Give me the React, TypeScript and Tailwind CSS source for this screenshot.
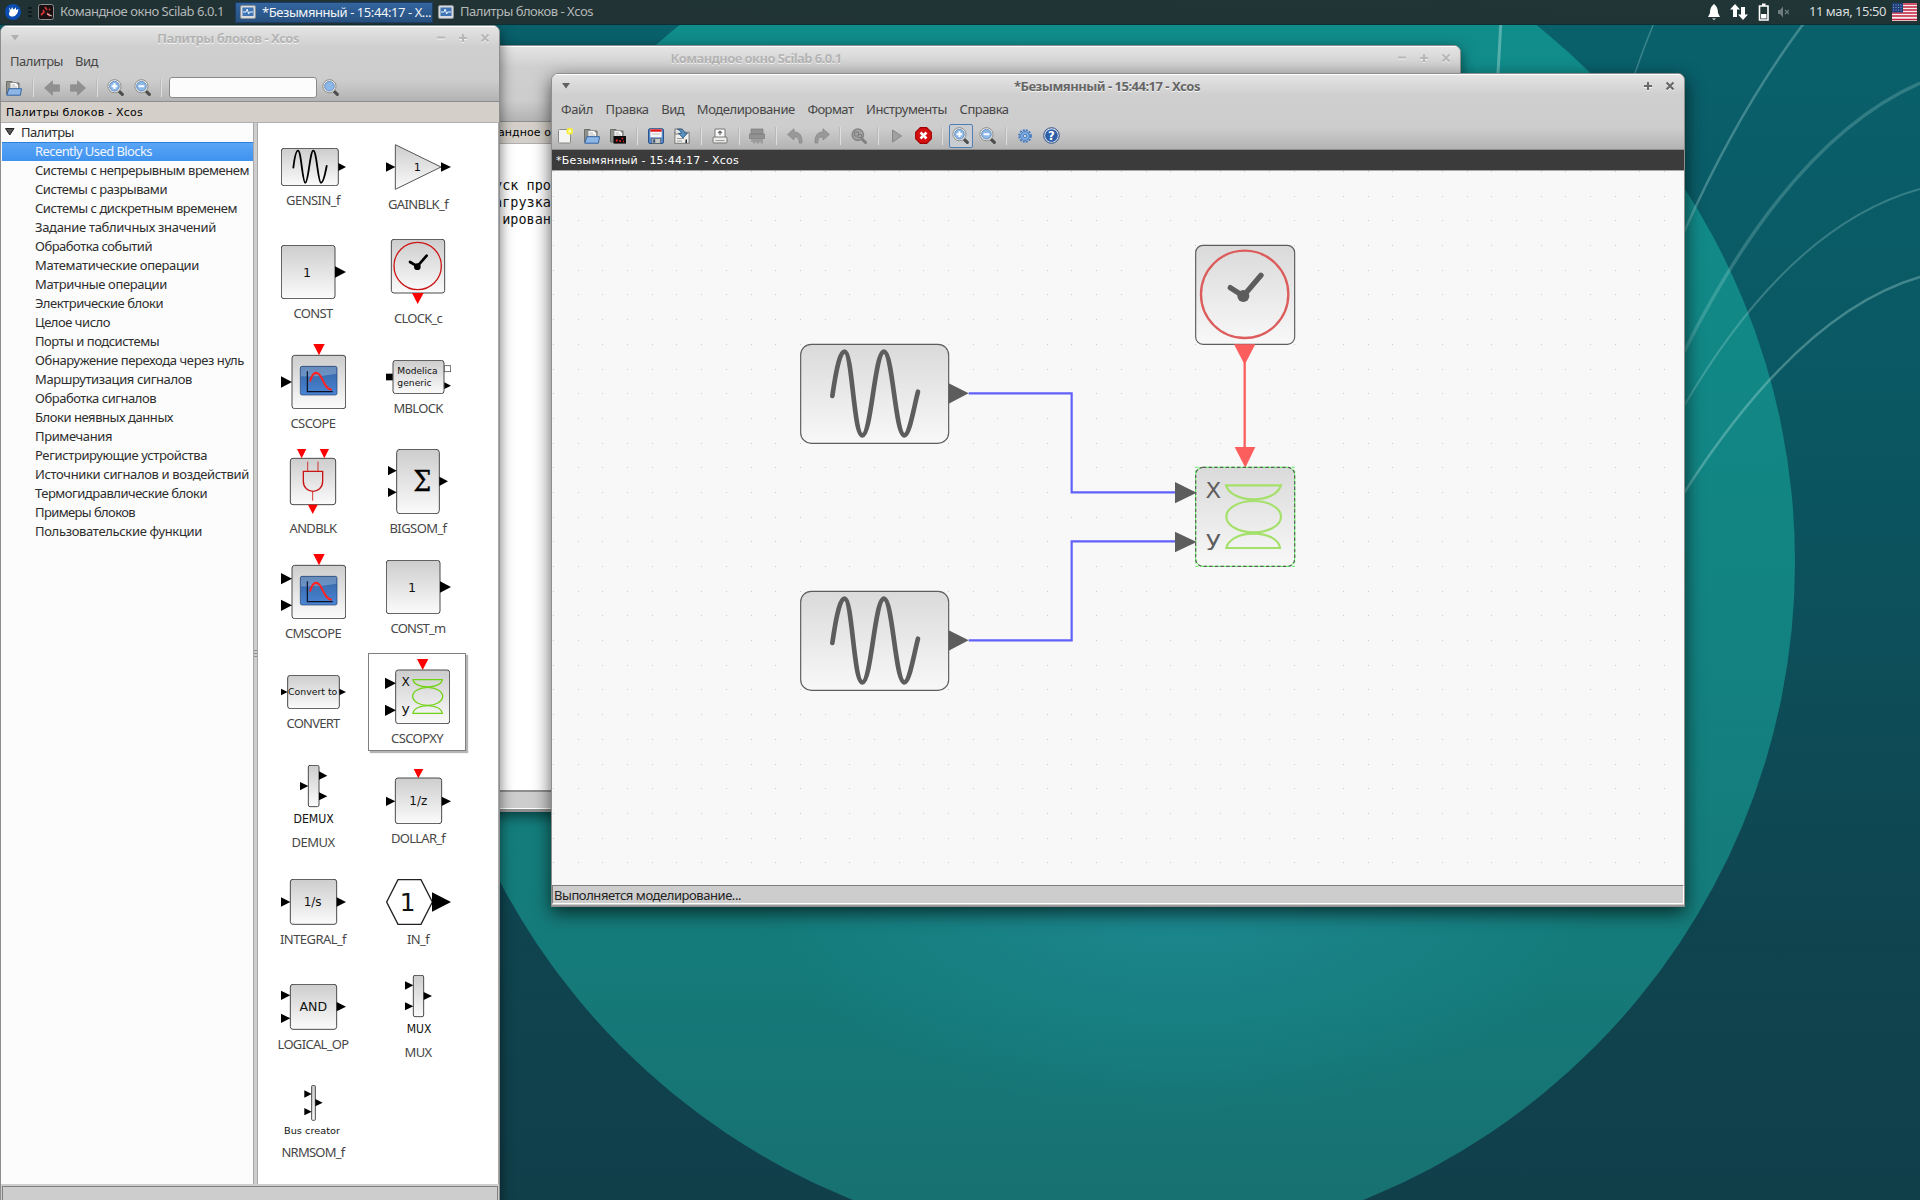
import React, { useLayoutEffect, useRef, useState } from "react";

/** One line of text whose tracking is adjusted so that it spans `w` pixels. */
function Txt({ w, children, className = "" }: { w: number; children: string; className?: string }) {
  const ref = useRef<HTMLSpanElement>(null);
  const [gap, setGap] = useState(0);
  useLayoutEffect(() => {
    const el = ref.current;
    if (!el) return;
    el.style.letterSpacing = "0px";
    const natural = el.getBoundingClientRect().width;
    setGap((w - natural) / children.length);
    el.style.letterSpacing = `${(w - natural) / children.length}px`;
  }, [w, children]);
  return (
    <span ref={ref} className={"inline-block whitespace-pre " + className} style={{ letterSpacing: `${gap}px` }}>
      {children}
    </span>
  );
}

const Tri = ({ p, f = "#000" }: { p: string; f?: string }) => <polygon points={p} fill={f} />;
const Box = (p: { x: number; y: number; w: number; h: number; r?: number }) => (
  <rect x={p.x} y={p.y} width={p.w} height={p.h} rx={p.r ?? 8} fill="url(#blk)" stroke="#4a4a4a" strokeWidth="3" />
);
const T = (p: { x: number; y: number; s: number; l?: number; c: string; f?: string; start?: boolean }) => (
  <text
    x={p.x}
    y={p.y}
    fontSize={p.s}
    textAnchor={p.start ? "start" : "middle"}
    textLength={p.l}
    lengthAdjust="spacingAndGlyphs"
    fill={p.f ?? "#111"}
    fontFamily="DejaVu Sans, sans-serif"
  >
    {p.c}
  </text>
);

function ScopeFace({ dy = 0 }: { dy?: number }) {
  return (
    <g transform={`translate(0 ${dy})`}>
      <Tri p="190,675 224,675 207,709" f="#f00" />
      <Box x={126} y={709} w={161} h={160} />
      <rect x="151" y="742" width="110" height="86" rx="5" fill="url(#scr)" stroke="#23406f" strokeWidth="2" />
      <path d="M153 744 H259 V764 Q210 774 153 772 Z" fill="#fff" opacity=".25" />
      <path d="M172 757 V818 H248" fill="none" stroke="#0a1020" strokeWidth="3.5" />
      <path d="M180 787 C188 762 196 758 205 764 C218 772 224 814 245 811" fill="none" stroke="#f22" strokeWidth="6" />
    </g>
  );
}

type Block = { name: string; w: number; box: [number, number, number, number]; art: React.ReactNode; selected?: boolean };

const blocks: Block[] = [
  {
    name: "GENSIN_f", w: 54, box: [93, 84, 195, 114],
    art: (<>
      <Box x={94} y={85} w={171} h={112} />
      <path d="M130 143 C134 110 139 92 144 92 C154 92 157 188 166 188 C175 188 180 92 190 92 C200 92 204 188 213 188 C220 188 225 165 230 138" fill="none" stroke="#000" strokeWidth="5.5" strokeLinecap="round" />
      <Tri p="265,129 288,141 265,153" />
    </>),
  },
  {
    name: "GAINBLK_f", w: 60, box: [408, 72, 195, 138],
    art: (<>
      <polygon points="436,74 573,141 436,208" fill="url(#blk)" stroke="#555" strokeWidth="3" />
      <Tri p="408,127 436,141 408,155" /><Tri p="573,127 603,141 573,155" />
      <T x={502} y={153} s={34} c="1" />
    </>),
  },
  {
    name: "CONST", w: 39, box: [93, 375, 195, 162],
    art: (<><Box x={94} y={376} w={161} h={160} /><Tri p="255,439 288,456 255,473" /><T x={171} y={470} s={38} c="1" /></>),
  },
  {
    name: "CLOCK_c", w: 48, box: [408, 360, 195, 195],
    art: (<>
      <Box x={424} y={361} w={160} h={161} />
      <circle cx="503" cy="441" r="71" fill="none" stroke="#cc1414" strokeWidth="4" />
      <path d="M480 429 L502 442 L530 410" fill="none" stroke="#000" strokeWidth="8" strokeLinecap="round" />
      <circle cx="502" cy="443" r="10" />
      <Tri p="486,522 521,522 503,555" f="#f00" />
    </>),
  },
  {
    name: "CSCOPE", w: 45, box: [93, 675, 195, 195],
    art: (<><ScopeFace /><Tri p="93,772 126,789 93,806" /></>),
  },
  {
    name: "MBLOCK", w: 49, box: [408, 720, 195, 102],
    art: (<>
      <Box x={429} y={721} w={153} h={100} />
      <rect x="408" y="761" width="20" height="20" />
      <rect x="583" y="737" width="19" height="18" fill="#fff" stroke="#555" strokeWidth="2.5" />
      <Tri p="583,787 603,797 583,807" />
      <T x={442} y={762} s={26} l={121} c="Modelica" start /><T x={442} y={797} s={26} l={103} c="generic" start />
    </>),
  },
  {
    name: "ANDBLK", w: 47, box: [93, 990, 195, 195],
    art: (<>
      <Box x={121} y={1018} w={136} h={139} />
      <Tri p="141,990 169,990 155,1018" f="#f00" /><Tri p="209,990 237,990 223,1018" f="#f00" /><Tri p="174,1157 203,1157 188,1185" f="#f00" />
      <g fill="none" stroke="#cc1414">
        <path d="M173 1028 V1057 M204 1028 V1057 M188 1118 V1145" strokeWidth="2.5" />
        <path d="M160 1057 H218 V1087 C218 1127 160 1127 160 1087 Z" strokeWidth="4" />
      </g>
    </>),
  },
  {
    name: "BIGSOM_f", w: 57, box: [408, 990, 192, 195],
    art: (<>
      <Box x={440} y={991} w={128} h={193} r={10} />
      <Tri p="414,1041 440,1055 414,1069" /><Tri p="414,1106 440,1120 414,1134" /><Tri p="568,1073 594,1087 568,1101" />
      <text x="517" y="1115" fontSize="86" textAnchor="middle" textLength="54" lengthAdjust="spacingAndGlyphs" fontFamily="DejaVu Serif, serif" stroke="#000" strokeWidth="1">Σ</text>
    </>),
  },
  {
    name: "CMSCOPE", w: 56, box: [93, 45, 195, 195],
    art: (<><ScopeFace dy={-630} /><Tri p="93,102 126,119 93,136" /><Tri p="93,182 126,199 93,216" /></>),
  },
  {
    name: "CONST_m", w: 55, box: [408, 60, 195, 162],
    art: (<><Box x={409} y={61} w={161} h={160} /><Tri p="570,124 603,141 570,158" /><T x={486} y={155} s={38} c="1" /></>),
  },
  {
    name: "CONVERT", w: 53, box: [93, 405, 195, 102],
    art: (<><Box x={113} y={406} w={155} h={100} /><Tri p="93,446 113,456 93,466" /><Tri p="268,446 288,456 268,466" /><T x={188} y={465} s={28} l={148} c="Convert to" /></>),
  },
  {
    name: "CSCOPXY", w: 52, box: [405, 357, 195, 195], selected: true,
    art: (<>
      <Tri p="501,357 535,357 518,390" f="#f00" />
      <Box x={437} y={390} w={162} h={161} />
      <Tri p="405,413 438,430 405,447" /><Tri p="405,494 438,511 405,528" />
      <T x={467} y={437} s={36} l={25} c="X" /><T x={467} y={519} s={38} l={25} c="y" />
      <g fill="none" stroke="#73d216" strokeWidth="4">
        <path d="M489 419 H577 C572 448 494 448 489 419 Z" /><ellipse cx="533" cy="469" rx="45" ry="27" /><path d="M489 520 H577 C572 489 494 489 489 520 Z" />
      </g>
    </>),
  },
  {
    name: "DEMUX", w: 43, box: [93, 675, 195, 189],
    art: (<><Box x={175} y={676} w={32} h={124} r={5} /><Tri p="150,726 175,738 150,751" /><Tri p="207,694 232,707 207,719" /><Tri p="207,757 232,769 207,781" /><T x={191} y={850} s={35} l={121} c="DEMUX" /></>),
  },
  {
    name: "DOLLAR_f", w: 54, box: [408, 690, 195, 165],
    art: (<><Tri p="491,690 520,690 505,718" f="#f00" /><Box x={436} y={717} w={139} h={137} /><Tri p="408,773 436,787 408,801" /><Tri p="575,773 603,787 575,801" /><T x={505} y={798} s={36} l={54} c="1/z" /></>),
  },
  {
    name: "INTEGRAL_f", w: 66, box: [93, 57, 195, 138],
    art: (<><Box x={121} y={58} w={139} h={135} /><Tri p="93,112 121,126 93,140" /><Tri p="260,112 288,126 260,140" /><T x={188} y={138} s={36} l={54} c="1/s" /></>),
  },
  {
    name: "IN_f", w: 22, box: [408, 57, 195, 138],
    art: (<><polygon points="410,126 444,59 513,59 547,126 513,193 444,193" fill="#fff" stroke="#222" strokeWidth="4" /><Tri p="546,97 603,126 546,155" /><T x={473} y={152} s={74} c="1" /></>),
  },
  {
    name: "LOGICAL_OP", w: 71, box: [93, 372, 195, 138],
    art: (<><Box x={121} y={373} w={139} h={135} /><Tri p="93,392 121,406 93,420" /><Tri p="93,461 121,475 93,489" /><Tri p="260,426 288,440 260,454" /><T x={190} y={452} s={35} l={83} c="AND" /></>),
  },
  {
    name: "MUX", w: 27, box: [408, 345, 195, 189],
    art: (<><Box x={490} y={346} w={31} h={124} r={5} /><Tri p="465,364 490,376 465,389" /><Tri p="465,427 490,439 465,451" /><Tri p="521,396 546,408 521,420" /><T x={507} y={520} s={35} l={74} c="MUX" /></>),
  },
  {
    name: "NRMSOM_f", w: 63, box: [93, 675, 195, 159],
    art: (<><Box x={185} y={676} w={11} h={105} r={3} /><Tri p="163,691 185,702 163,713" /><Tri p="163,744 185,755 163,766" /><Tri p="196,717 218,728 196,739" /><T x={186} y={822} s={28} l={168} c="Bus creator" /></>),
  },
];

const tree: [string, number][] = [
  ["Recently Used Blocks", 117], ["Системы с непрерывным временем", 214], ["Системы с разрывами", 132],
  ["Системы с дискретным временем", 202], ["Задание табличных значений", 181], ["Обработка событий", 117],
  ["Математические операции", 164], ["Матричные операции", 132], ["Электрические блоки", 128], ["Целое число", 75],
  ["Порты и подсистемы", 124], ["Обнаружение перехода через нуль", 209], ["Маршрутизация сигналов", 157],
  ["Обработка сигналов", 121], ["Блоки неявных данных", 138], ["Примечания", 77], ["Регистрирующие устройства", 172],
  ["Источники сигналов и воздействий", 214], ["Термогидравлические блоки", 172], ["Примеры блоков", 100],
  ["Пользовательские функции", 167],
];

/* ---------- toolbar icons, 16 × 16 ---------- */
const Ic = ({ children, s = 16 }: { children: React.ReactNode; s?: number }) => (
  <svg width={s} height={s} viewBox="0 0 16 16" className="block shrink-0">{children}</svg>
);
const IcNew = () => (
  <Ic><rect x="1.5" y="1.5" width="12" height="13.5" rx="1" fill="#f4f4f2" stroke="#888a85" /><circle cx="12.8" cy="3.2" r="3.4" fill="#f6ee3c" /><circle cx="12.8" cy="3.2" r="1.6" fill="#fffcb0" /></Ic>
);
const FolderBase = () => (
  <><path d="M.5 14 V1.5 H6 L7 3 H13 V14 Z" fill="#8f918c" stroke="#6c6e69" /><path d="M4 9 V2.5 H10 L12.5 5 V9 Z" fill="#fafafa" stroke="#888a85" strokeWidth=".9" /><path d="M5.5 5 H9 M5.5 7 H11" stroke="#b5b5b5" /></>
);
const IcOpen = () => (
  <Ic><FolderBase /><path d="M2.8 8.7 H15.5 L14.4 15.2 H.8 Z" fill="#8cb6e6" stroke="#3465a4" /></Ic>
);
const IcOpenSci = () => (
  <Ic><FolderBase /><rect x="3.5" y="8" width="12.5" height="7.6" fill="#0b0b0b" /><path d="M6 13.5 L7.5 11.5 M10 14 V12 M11.5 10.5 h1.8 M13 13.5 h1" stroke="#e02020" strokeWidth="1.6" /></Ic>
);
const IcSave = () => (
  <Ic><rect x=".6" y=".8" width="14.8" height="14.6" rx="1.2" fill="#5d8fcb" stroke="#204a87" /><rect x="2.3" y="1.3" width="11.4" height="8" fill="#f6f6f6" /><rect x="2.3" y="1.3" width="11.4" height="2.4" fill="#e01818" /><path d="M4 6 H12" stroke="#c2c2c2" /><rect x="4" y="10.5" width="8.3" height="4.9" fill="#c6c8c3" stroke="#555" strokeWidth=".6" /><rect x="5.2" y="11.3" width="2" height="3.4" fill="#34517a" /></Ic>
);
const IcImport = () => (
  <Ic><rect x=".9" y="4.3" width="14.2" height="11" fill="#efefed" stroke="#777" /><rect x="1" y="1" width="7" height="5" fill="#e4e4e2" stroke="#777" /><path d="M3 10.5 H10 M3 13 H8" stroke="#999" /><path d="M12.2 11.5 V15" stroke="#111" strokeWidth="1.4" /><path d="M3.5 1.2 C8 .6 10.8 2.4 10.8 5.3 H13.4 L9 10 L4.6 5.3 H7.2 C7.2 3.4 6 2.4 3.5 1.2 Z" fill="#5b93bf" stroke="#1f4f7c" strokeWidth=".8" /></Ic>
);
const IcPrint = () => (
  <Ic><path d="M3 10 V1 H13 V10" fill="#fafafa" stroke="#777" /><path d="M8 7 V3.5 M6.2 5 L8 3.3 L9.8 5" fill="none" stroke="#666" strokeWidth="1.2" /><rect x="1" y="9" width="14" height="6" rx="1" fill="#ececea" stroke="#777" /><path d="M3.5 12.6 H12.5" stroke="#999" /></Ic>
);
const IcShred = () => (
  <Ic><path d="M2 1 H14 V6 H16 V10.5 H0 V6 H2 Z" fill="#929292" stroke="#7b7b7b" strokeWidth=".7" /><path d="M3 10.5 V14 M5 10.5 V15.5 M7 10.5 V14.5 M9 10.5 V15.5 M11 10.5 V14.5 M13 10.5 V15.5" stroke="#8b8b8b" strokeWidth="1.3" /><path d="M2 6 H14" stroke="#7a7a7a" /></Ic>
);
const IcUndo = ({ flip = false }: { flip?: boolean }) => (
  <Ic><g transform={flip ? "translate(16 0) scale(-1 1)" : undefined}><path d="M.6 6.5 L7 .8 V4 C12.5 4 15.2 7.5 15 15 H12.2 C12.2 10.5 11 9 7 9 V12 Z" fill="#999" stroke="#888" strokeWidth=".8" /></g></Ic>
);
const IcFind = () => (
  <Ic><path d="M10 10 L14.5 14.5" stroke="#808080" strokeWidth="3" strokeLinecap="round" /><circle cx="6.8" cy="6.8" r="5.7" fill="#a2a2a2" stroke="#858585" strokeWidth="1.5" /><path d="M3.5 4 h4 v4 h-4z M7 6.5 h3.5 v3 h-4" fill="none" stroke="#7c7c7c" /></Ic>
);
const IcPlay = () => (<Ic><path d="M3.5 2 L12.5 8 L3.5 14 Z" fill="#a0a0a0" stroke="#868686" /></Ic>);
const IcStop = () => (
  <Ic s={17}><path d="M5 .6 H11 L15.4 5 V11 L11 15.4 H5 L.6 11 V5 Z" fill="#d40f0f" stroke="#a00000" /><path d="M5.2 5.2 L10.8 10.8 M10.8 5.2 L5.2 10.8" stroke="#fff" strokeWidth="2.4" /></Ic>
);
const IcMag = ({ sign }: { sign: "+" | "-" | "" }) => (
  <Ic s={17}><path d="M11 11.2 L14.4 14.4" stroke="#4c4f4c" strokeWidth="3" strokeLinecap="round" /><circle cx="7" cy="6.8" r="6.200" fill="#e8e8e6" stroke="#8a8c88" strokeWidth=".9" /><circle cx="7" cy="6.8" r="4.5" fill="#8db9e8" stroke="#5b87bd" strokeWidth=".8" />
    {sign !== "" && <path d={sign === "+" ? "M4.3 6.8 H9.7 M7 4.1 V9.5" : "M4.3 6.8 H9.7"} stroke="#fff" strokeWidth="1.9" />}
  </Ic>
);
const IcGear = () => (
  <Ic><circle cx="8" cy="8" r="5.9" fill="none" stroke="#3f7ac4" strokeWidth="1.8" strokeDasharray="2 1.1" /><circle cx="8" cy="8" r="4.4" fill="#84aee2" stroke="#3f7ac4" strokeWidth="1" /><circle cx="8" cy="8" r="1.8" fill="#d6d6d6" stroke="#3f7ac4" /></Ic>
);
const IcHelp = () => (
  <Ic s={17}><circle cx="8" cy="8" r="7.3" fill="#e7edf6" stroke="#20427c" strokeWidth=".9" /><circle cx="8" cy="8" r="6" fill="#2f5ea8" /><text x="8" y="12" fontSize="11" fontWeight="bold" textAnchor="middle" fill="#fff" fontFamily="DejaVu Sans, sans-serif">?</text></Ic>
);
const IcArrow = ({ flip = false }: { flip?: boolean }) => (
  <Ic><g transform={flip ? "translate(16 0) scale(-1 1)" : undefined}><path d="M.5 8 L8.5 .8 V4.8 H15.5 V11.2 H8.5 V15.2 Z" fill="#909090" stroke="#868686" strokeWidth=".6" /></g></Ic>
);

const Slot = ({ children }: { children: React.ReactNode }) => (
  <div className="flex h-6 w-[26.4px] shrink-0 items-center justify-center">{children}</div>
);
const Sep = () => (
  <div className="flex h-6 w-[11.3px] shrink-0 items-center justify-center"><div className="h-[18px] w-[2px] border-l border-[#b9b9b9] bg-[#dedede]" /></div>
);

const BtnMin = ({ c }: { c: string }) => (<svg width="22" height="12" className="block"><path d="M7 6.5 H15" stroke="#f2f2f2" strokeWidth="2" /><path d="M7 5.5 H15" stroke={c} strokeWidth="2" /></svg>);
const BtnMax = ({ c }: { c: string }) => (<svg width="22" height="12" className="block"><path d="M7 7 H15 M11 3 V11" stroke="#f2f2f2" strokeWidth="2" /><path d="M7 6 H15 M11 2 V10" stroke={c} strokeWidth="2" /></svg>);
const BtnX = ({ c }: { c: string }) => (<svg width="22" height="12" className="block"><path d="M7.5 3.5 L14.5 10.5 M14.5 3.5 L7.5 10.5" stroke="#f2f2f2" strokeWidth="2" /><path d="M7.5 2.5 L14.5 9.5 M14.5 2.5 L7.5 9.5" stroke={c} strokeWidth="2.2" /></svg>);
const Caret = ({ c }: { c: string }) => (<svg width="10" height="8" className="block"><path d="M1 1 H9 L5 6.5 Z" fill={c} /></svg>);

const XcosIcon = () => (
  <svg width="16" height="16" className="block shrink-0"><rect x=".5" y="1.5" width="15" height="13" rx="1.5" fill="#d7dade" stroke="#8e9296" /><rect x="2.5" y="3.5" width="11" height="8.5" fill="#3f74b5" /><path d="M3 8 H6 L7.2 5 L8.6 10 L9.6 8 H13" fill="none" stroke="#e8f2ff" /></svg>
);

function Wallpaper() {
  return (
    <svg width="1920" height="1200" className="absolute inset-0 block">
      <defs>
        <linearGradient id="blk" x1="0" y1="0" x2="0" y2="1"><stop offset="0" stopColor="#cdcdcd" /><stop offset="1" stopColor="#fbfbfb" /></linearGradient>
        <linearGradient id="blkSoft" x1="0" y1="0" x2="0" y2="1"><stop offset="0" stopColor="#dadada" /><stop offset="1" stopColor="#f8f8f8" /></linearGradient>
        <linearGradient id="scr" x1="0" y1="0" x2="0" y2="1"><stop offset="0" stopColor="#3465a4" /><stop offset="1" stopColor="#4a84d4" /></linearGradient>
        <linearGradient id="sky" x1="0" y1="0" x2="0" y2="1"><stop offset="0" stopColor="#09616c" /><stop offset=".35" stopColor="#0a5762" /><stop offset=".75" stopColor="#0f4550" /><stop offset="1" stopColor="#103f4a" /></linearGradient>
        <linearGradient id="disc" x1="0" y1="0" x2="0" y2="1"><stop offset="0" stopColor="#108f8e" /><stop offset=".5" stopColor="#128482" /><stop offset=".8" stopColor="#157a79" /><stop offset="1" stopColor="#186f6f" /></linearGradient>
        <radialGradient id="glow"><stop offset="0" stopColor="#1d8a94" stopOpacity=".85" /><stop offset="1" stopColor="#1d8a94" stopOpacity="0" /></radialGradient>
      </defs>
      <rect width="1920" height="1200" fill="url(#sky)" />
      <circle cx="1108" cy="562" r="687" fill="url(#disc)" />
      <ellipse cx="1180" cy="880" rx="420" ry="240" fill="url(#glow)" />
      <g fill="none" stroke="#bfe6e4">
        <path d="M1502 0 Q1500 40 1497 90" strokeWidth="3" opacity=".4" />
        <path d="M1664 0 Q1648 35 1634 76" strokeWidth="1.5" opacity=".28" />
        <path d="M1822 0 Q1745 95 1684 232" strokeWidth="2.5" opacity=".3" />
        <path d="M1920 83 Q1790 140 1684 352" strokeWidth="3.5" opacity=".22" />
        <path d="M1920 189 Q1790 225 1684 406" strokeWidth="2" opacity=".25" />
        <path d="M1920 277 Q1800 312 1684 493" strokeWidth="2.5" opacity=".32" />
      </g>
    </svg>
  );
}

function Taskbar() {
  return (
    <div className="absolute inset-x-0 top-0 flex h-6 items-center bg-[linear-gradient(90deg,#22303399,#22303300),linear-gradient(#203536,#203435)] text-[13px] leading-[22px] text-[#b3b8b8] shadow-[0_1px_0_#0b2f33]">
      <svg width="16" height="16" className="ml-[5px] block"><circle cx="8" cy="8" r="8" fill="#0b4db0" /><path d="M4 3.5 L6 6 L7 3 L8.6 5.8 L11 3.2 L11 6 L13.4 5 C13 10 10 13 6.5 12.5 C3.5 12 3.5 9 4.8 7.5 Z" fill="#fff" /></svg>
      <div className="ml-[7px] flex w-1 flex-col gap-[2px]"><i className="h-[2px] bg-[#101c1d]" /><i className="h-[2px] bg-[#101c1d]" /><i className="h-[2px] bg-[#101c1d]" /></div>
      <svg width="16" height="16" className="ml-[6px] block"><rect x=".5" y=".5" width="15" height="15" rx="2" fill="#1a1012" stroke="#8b8f8f" /><path d="M3 11 L6 8 L5 6 M7 3 L9 6 M9 9 L12 12 M11 5 l1 1" stroke="#c33" strokeWidth="1.8" /><path d="M9 10 L14 12" stroke="#ccc" /></svg>
      <div className="ml-[6px] w-[175px] pb-[2px]"><Txt w={164}>Командное окно Scilab 6.0.1</Txt></div>
      <div className="flex h-[21px] w-[198px] items-center border border-[#1c3c63] bg-[linear-gradient(#33659f,#27507f)] pl-1 leading-[18px] text-[#f2f4f6]">
        <XcosIcon /><Txt w={169} className="ml-[6px]">*Безымянный - 15:44:17 - X...</Txt>
      </div>
      <div className="ml-[5px] flex flex-1 items-center gap-[6px]"><XcosIcon /><Txt w={133} className="pb-[2px]">Палитры блоков - Xcos</Txt></div>
      <div className="flex items-center text-[#d8dcdc]">
        <svg width="90" height="20" className="mr-[20px] block">
          <path d="M15 2 C16.5 3.5 19 5 19 11 L21 15 H9 L11 11 C11 5 13.5 3.5 15 2 Z M13 16.5 H17 L15 18 Z" fill="#fff" />
          <path d="M36 2 L41 7.5 H38 V15 H34 V7.5 H31 Z M44 18 L39 12.5 H42 V5 H46 V12.5 H49 Z" fill="#fff" />
          <path d="M60.5 4 H69 V18 H60.5 Z" fill="none" stroke="#fff" strokeWidth="1.6" /><path d="M63 1.5 H66.5 V4 H63 Z M62 12 H67.5 V16.5 H62 Z" fill="#fff" />
          <path d="M79 8 H81 L84 4.5 V15.500 L81 12 H79 Z" fill="#6f7c7d" /><path d="M86 8 L90 12 M90 8 L86 12" stroke="#6f7c7d" strokeWidth="1.2" />
        </svg>
        <Txt w={77} className="pb-[2px]">11 мая, 15:50</Txt>
        <svg width="25" height="18" className="ml-[6px] mr-[3px] block"><rect width="25" height="18" fill="#f4eef0" /><path d="M0 1 H25 M0 4 H25 M0 7 H25 M0 10 H25 M0 13 H25 M0 16.5 H25" stroke="#c5203e" strokeWidth="1.5" /><rect width="11" height="9.5" fill="#20407c" /><path d="M1 2 H10 M1 4.5 H10 M1 7 H10" stroke="#9fb2d6" strokeWidth=".8" strokeDasharray="1 1.5" /></svg>
      </div>
    </div>
  );
}

const header = "bg-[linear-gradient(#e5e5e5,#cfcfcf_28%,#cdcdcd_72%,#b3b3b3)]";
const frame = "absolute flex flex-col overflow-hidden border border-[#8e8e8e] bg-[#cdcdcd]";

function CommandWindow() {
  return (
    <div className={frame + " left-[52px] top-[45px] h-[767px] w-[1409px] rounded-t-[7px] shadow-[0_4px_14px_rgba(0,0,0,.55)]"}>
      <div className={"h-[76px] shrink-0 border-b border-[#8e8e8e] shadow-[inset_0_1px_0_#fff] " + header}>
        <div className="flex h-6 items-center">
          <div className="w-[68px]" />
          <div className="flex flex-1 justify-center text-[13px] font-bold leading-6 text-[#b4b4b4] [text-shadow:0_1px_0_#f4f4f4]"><Txt w={171}>Командное окно Scilab 6.0.1</Txt></div>
          <div className="mr-[3px] flex"><BtnMin c="#b8b8b8" /><BtnMax c="#b8b8b8" /><BtnX c="#b8b8b8" /></div>
        </div>
      </div>
      <div className="h-[22px] shrink-0 border-b border-[#b0b0b0] bg-[#d4cfc8] pl-[445px] font-['DejaVu_Sans'] text-[11px] leading-[22px] text-black"><Txt w={53}>андное о</Txt></div>
      <div className="flex-1 whitespace-pre bg-white pl-[441px] pt-[33px] font-['DejaVu_Sans_Mono'] text-[13.5px] leading-[17px] text-[#111]">
        <div>уск про</div><div>агрузка</div><div> ирован</div>
      </div>
      <div className="h-[21px] shrink-0 border-y-2 border-[#8e8e8e] bg-[#cdcdcd] shadow-[inset_0_-1px_0_#fff]" />
    </div>
  );
}

function PaletteWindow() {
  return (
    <div className={frame + " left-0 top-[25px] h-[1190px] w-[500px] rounded-t-[7px] shadow-[0_4px_14px_rgba(0,0,0,.55)]"}>
      <div className={"h-[76px] shrink-0 border-b border-[#8e8e8e] shadow-[inset_0_1px_0_#fff] " + header}>
        <div className="flex h-[23px] items-center">
          <div className="flex w-[63px] pl-[9px]"><Caret c="#b0b0b0" /></div>
          <div className="flex flex-1 justify-center pr-[47px] text-[13px] font-bold leading-6 text-[#b4b4b4] [text-shadow:0_1px_0_#f4f4f4]"><Txt w={142} className="ml-[9px]">Палитры блоков - Xcos</Txt></div>
          <div className="mr-[3px] flex"><BtnMin c="#b8b8b8" /><BtnMax c="#b8b8b8" /><BtnX c="#b8b8b8" /></div>
        </div>
        <div className="flex h-[25px] items-center gap-3 pl-[9px] text-[13px] text-[#474747]"><Txt w={53}>Палитры</Txt><Txt w={23}>Вид</Txt></div>
        <div className="flex h-[27px] items-center">
          <Slot><IcOpen /></Slot><Sep /><Slot><IcArrow /></Slot><Slot><IcArrow flip /></Slot><Sep />
          <Slot><IcMag sign="+" /></Slot><Slot><IcMag sign="-" /></Slot><Sep />
          <div className="ml-[2px] h-[21px] w-[148px] rounded-[3px] border border-[#8a8a8a] bg-[#fcfcfc]" />
          <Slot><IcMag sign="" /></Slot>
        </div>
      </div>
      <div className="h-[21px] shrink-0 border-b border-[#b0b0b0] bg-[#d4cfc8] pl-[5px] font-['DejaVu_Sans'] text-[11px] leading-[22px] text-black"><Txt w={137}>Палитры блоков - Xcos</Txt></div>
      <div className="flex h-[1061px] shrink-0">
        <div className="w-[253px] shrink-0 overflow-hidden border-r border-[#a8a8a8] bg-[#fcfcfc] pl-px text-[13px] text-[#2e2e2e]">
          <div className="flex h-[19px] items-center pb-px pl-[3px] leading-[18px]">
            <svg width="10" height="8" className="mr-[6px] block"><path d="M.5 .5 H9 L4.8 7 Z" fill="#555" stroke="#222" /></svg><Txt w={53}>Палитры</Txt>
          </div>
          {tree.map(([t, w], i) => (
            <div key={t} className={"h-[19px] pl-[33px] " + (i === 0 ? "border-t border-[#2f7fd6] bg-[linear-gradient(#5aa5f7,#3f92ee)] leading-[17px] text-[#eef5ff]" : "leading-[19px]")}><Txt w={w}>{t}</Txt></div>
          ))}
        </div>
        <div className="flex w-[3px] shrink-0 flex-col items-center justify-center gap-[2px] bg-[#cdcdcd]">
          <i className="h-px w-full bg-[#909090]" /><i className="h-px w-full bg-[#909090]" /><i className="h-px w-full bg-[#909090]" />
        </div>
        <div className="grid flex-1 auto-rows-[98px] grid-cols-[98px_98px] content-start gap-[7px] border-x border-[#a8a8a8] bg-white pl-[6px] pt-[5px]">
          {blocks.map((b) => (
            <div key={b.name} className={"flex flex-col items-center justify-center " + (b.selected ? "-ml-px mr-px border border-[#808080] shadow-[2px_2px_1px_#b5b5b5]" : "")}>
              <svg width={b.box[2] / 3} height={b.box[3] / 3} viewBox={b.box.join(" ")} className="block shrink-0">{b.art}</svg>
              <div className="mt-[6px] flex h-[15px] items-start justify-center text-[13px] leading-[17px] text-[#474747]"><Txt w={b.w}>{b.name}</Txt></div>
            </div>
          ))}
        </div>
      </div>
      <div className="mx-[1px] mt-[2px] h-8 shrink-0 border border-[#808080] bg-[#cdcdcd]" />
    </div>
  );
}

const menu: [string, number][] = [["Файл", 32], ["Правка", 43], ["Вид", 23], ["Моделирование", 98], ["Формат", 46], ["Инструменты", 81], ["Справка", 49]];

const dots = (() => {
  let d = "";
  for (let r = 0; r < 29; r++)
    for (let c = 0; c < 46; c++) d += `M${Math.round(c * 24.69)} ${Math.round(r * 24.69) + 0.5}h1`;
  return d;
})();

const SineBlock = ({ dy }: { dy: number }) => (
  <g transform={`translate(0 ${dy})`}>
    <rect x="62" y="73" width="444" height="297" rx="32" fill="url(#blkSoft)" stroke="#5d5d5d" strokeWidth="3.5" />
    <path d="M157 228 C171 130 182 95 194 95 C217 95 221 346 247 346 C274 346 284 95 312 95 C338 95 346 346 373 346 C388 346 400 270 414 215" fill="none" stroke="#5d5d5d" strokeWidth="14" strokeLinecap="round" />
    <Tri p="506,190 566,220 506,251" f="#5d5d5d" />
  </g>
);

function Diagram() {
  return (
    <svg width="1132" height="713" viewBox="552 171 1132 713" className="block">
      <path d={dots} stroke="#cbcbcb" transform="translate(553 171)" />
      <g transform="translate(780 320) scale(.33333)">
        <g fill="none" stroke="#6060fa" strokeWidth="6.5">
          <path d="M566 220 H875 V517 H1185" /><path d="M566 961 H875 V664 H1185" />
        </g>
        <SineBlock dy={0} /><SineBlock dy={741} />
      </g>
      <g transform="translate(1080 220) scale(.33333)">
        <rect x="347" y="76" width="297" height="297" rx="22" fill="url(#blkSoft)" stroke="#5d5d5d" strokeWidth="3.5" />
        <circle cx="494" cy="223" r="131" fill="none" stroke="#dc5c5c" strokeWidth="7" />
        <path d="M451 203 L490 228 L543 166" fill="none" stroke="#5d5d5d" strokeWidth="16" strokeLinecap="round" />
        <circle cx="490" cy="228" r="18" fill="#5d5d5d" />
        <path d="M494 425 V690" stroke="#fc5e5e" strokeWidth="7" />
        <Tri p="462,373 526,373 494,434" f="#fc5e5e" /><Tri p="464,681 526,681 496,743" f="#fc5e5e" />
        <rect x="347" y="742" width="297" height="297" fill="none" stroke="#5cf65c" strokeWidth="3" strokeDasharray="9 9" />
        <rect x="347" y="742" width="297" height="297" rx="22" fill="url(#blkSoft)" stroke="#5cf65c" strokeWidth="3" />
        <rect x="347" y="742" width="297" height="297" rx="22" fill="none" stroke="#5d5d5d" strokeWidth="3.5" strokeDasharray="10 7" />
        <Tri p="285,786 350,818 285,850" f="#5d5d5d" /><Tri p="285,935 350,966 285,997" f="#5d5d5d" />
        <T x={400} y={833} s={66} l={47} c="X" f="#5d5d5d" /><T x={400} y={979} s={66} l={47} c="y" f="#5d5d5d" />
        <g fill="none" stroke="#a4e06a" strokeWidth="6.5">
          <path d="M438 796 H603 C594 822 564 838 520 838 C478 838 447 822 438 796 Z" />
          <ellipse cx="521" cy="890" rx="82" ry="47" />
          <path d="M439 984 H600 C598 960 566 941 520 941 C475 941 444 960 439 984 Z" />
        </g>
      </g>
    </svg>
  );
}

function XcosWindow() {
  return (
    <div className={frame + " left-[551px] top-[73px] h-[834px] w-[1134px] rounded-t-[7px] shadow-[0_6px_18px_rgba(0,0,0,.65)]"}>
      <div className={"h-[76px] shrink-0 border-b border-[#8e8e8e] shadow-[inset_0_1px_0_#fff] " + header}>
        <div className="flex h-6 items-center">
          <div className="flex w-12 pl-[9px]"><Caret c="#606060" /></div>
          <div className="flex flex-1 justify-center pr-[23px] text-[13px] font-bold leading-6 text-[#666] [text-shadow:0_1px_0_#f4f4f4]"><Txt w={186}>*Безымянный - 15:44:17 - Xcos</Txt></div>
          <div className="mr-[3px] flex"><BtnMax c="#6a6a6a" /><BtnX c="#6a6a6a" /></div>
        </div>
        <div className="flex h-6 items-center gap-[12.6px] pl-[9px] text-[13px] text-[#474747]">{menu.map(([t, w]) => <Txt key={t} w={w}>{t}</Txt>)}</div>
        <div className="flex h-[27px] items-center">
          <Slot><IcNew /></Slot><Slot><IcOpen /></Slot><Slot><IcOpenSci /></Slot><Sep />
          <Slot><IcSave /></Slot><Slot><IcImport /></Slot><Sep />
          <Slot><IcPrint /></Slot><Sep />
          <Slot><IcShred /></Slot><Sep />
          <Slot><IcUndo /></Slot><Slot><IcUndo flip /></Slot><Sep />
          <Slot><IcFind /></Slot><Sep />
          <Slot><IcPlay /></Slot><Slot><IcStop /></Slot><Sep />
          <Slot><div className="flex h-6 w-6 shrink-0 items-center justify-center rounded-[2px] border border-[#4f7fb5] bg-[#c9cdd2]"><IcMag sign="+" /></div></Slot>
          <Slot><IcMag sign="-" /></Slot><Sep />
          <Slot><IcGear /></Slot><Slot><IcHelp /></Slot>
        </div>
      </div>
      <div className="h-[21px] shrink-0 border-b border-[#a8a8a8] bg-[#3b3b3b] pl-1 font-['DejaVu_Sans'] text-[11px] leading-[21px] text-white"><Txt w={183}>*Безымянный - 15:44:17 - Xcos</Txt></div>
      <div className="h-[713px] shrink-0 bg-[#f8f8f8]"><Diagram /></div>
      <div className="mt-px flex h-[19px] shrink-0 items-center border border-[#808080] border-b-white border-r-white pl-px text-[13px] leading-[18px] text-[#222] shadow-[0_-1px_0_#f4f4f4]"><Txt w={187}>Выполняется моделирование...</Txt></div>
      <div className="mt-px h-px bg-[#9a9a9a]" />
    </div>
  );
}

export default function App() {
  return (
    <div className="relative h-[1200px] w-[1920px] overflow-hidden bg-[#0a5762] font-['Noto_Sans','Open_Sans',sans-serif]">
      <Wallpaper />
      <CommandWindow />
      <PaletteWindow />
      <XcosWindow />
      <Taskbar />
    </div>
  );
}
